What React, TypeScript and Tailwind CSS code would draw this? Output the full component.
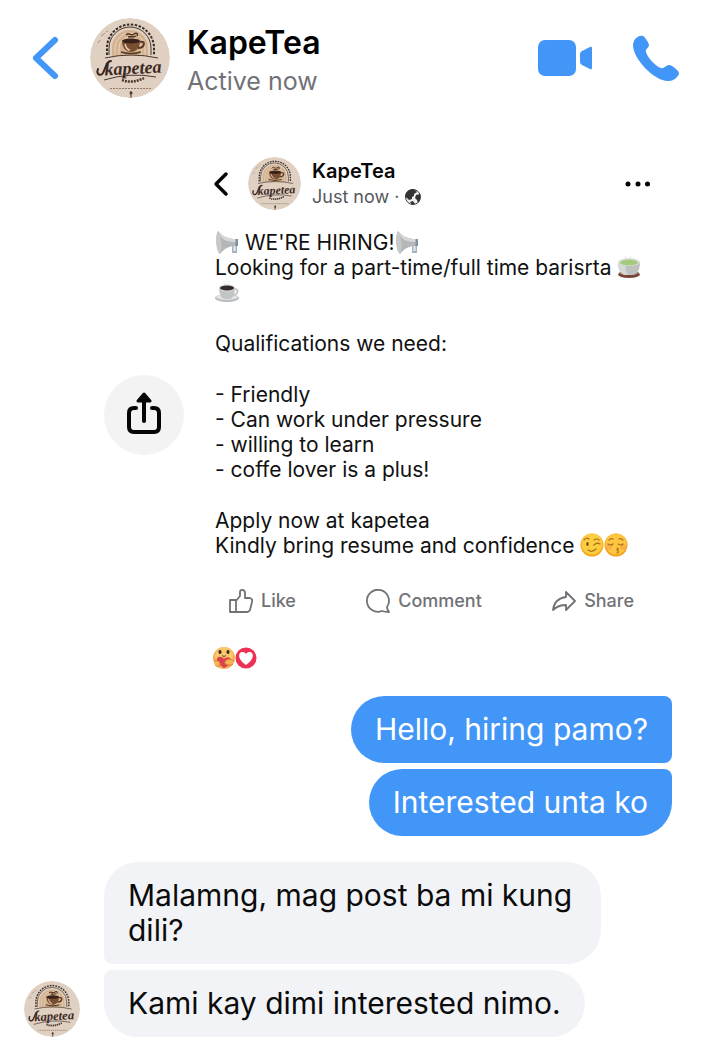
import { ReactNode } from "react";
import clsx from "clsx";

interface Message {
  id: number;
  text: string;
  mine: boolean;
  shape: string;
}

const messages: Message[] = [
  {
    id: 1,
    text: "Hello, hiring pamo?",
    mine: true,
    shape: "rounded-l-[34px] rounded-r-lg",
  },
  {
    id: 2,
    text: "Interested unta ko",
    mine: true,
    shape: "rounded-l-[34px] rounded-tr-lg rounded-br-[34px]",
  },
  {
    id: 3,
    text: "Malamng, mag post ba mi kung dili?",
    mine: false,
    shape: "rounded-t-[34px] rounded-br-[34px] rounded-bl-lg",
  },
  {
    id: 4,
    text: "Kami kay dimi interested nimo.",
    mine: false,
    shape: "rounded-r-[34px] rounded-bl-[34px] rounded-tl-lg",
  },
];

const qualifications = [
  "Friendly",
  "Can work under pressure",
  "willing to learn",
  "coffe lover is a plus!",
];

function Avatar({ className }: { className: string }) {
  return (
    <svg
      viewBox="0 0 80 80"
      role="img"
      aria-label="KapeTea"
      className={clsx("shrink-0 rounded-full", className)}
    >
      <circle cx="40" cy="40" r="40" fill="#dfd0c2" />
      <path d="M11 18l4-3M16 14l2-1M8 25l2-3" stroke="#a59385" strokeWidth="1" />
      <path d="M22 38V30a18 18 0 0 1 36 0v8z" fill="#d2b28f" />
      <path
        d="M25 37v-7a15 15 0 0 1 30 0v7M29 37v-7a11 11 0 0 1 22 0v7"
        fill="none"
        stroke="#e9d5bd"
        strokeWidth="1"
      />
      <path
        d="M19 37v-7a21 21 0 0 1 42 0v7"
        fill="none"
        stroke="#4a372d"
        strokeWidth="1"
      />
      <path
        d="M17 37v-7a23.500 23.500 0 0 1 47 0v7"
        fill="none"
        stroke="#382a25"
        strokeWidth="2"
        strokeDasharray="2.500 1.500"
      />
      <path d="M36 17c3-4 4 2 8-1c3-2 4 0 3 2M38 19c3-1 5 1 8-1" fill="none" stroke="#4a2d1d" strokeWidth="1.500" />
      <path d="M32 23h18c0 7-4 11-9 11s-9-4-9-11z" fill="#7a4f31" />
      <ellipse cx="41" cy="23" rx="9" ry="2.500" fill="#39221a" />
      <path d="M35 26c1 4 3 6 5 6" fill="none" stroke="#e6cdb0" strokeWidth="1.500" />
      <path d="M50 24c6-2 5 6-2 6" fill="none" stroke="#5a3927" strokeWidth="2" />
      <path d="M31 34q10 3 20 0" fill="none" stroke="#5a3927" strokeWidth="1.500" />
      <path d="M15 40q26-6 53 0M14 62q26-8 52-3" fill="none" stroke="#4b3930" strokeWidth="1" />
      <text
        x="43"
        y="56"
        textAnchor="middle"
        transform="rotate(-3 43 50)"
        fontFamily="Liberation Serif, serif"
        fontStyle="italic"
        fontWeight="700"
        fontSize="18"
        fill="#3b2822"
      >
        kapetea
      </text>
      <path d="M8 51c-2 5 2 8 5 4 3-5 3-12 8-12" fill="none" stroke="#3b2822" strokeWidth="2" strokeLinecap="round" />
      <path d="M32 62q10 4 22-2" fill="none" stroke="#493730" strokeWidth="2.500" strokeDasharray="2 1" />
      <path d="M20 70.500h41" stroke="#8c7669" strokeWidth="1" strokeDasharray="2 1" />
      <path d="M41 73v7" stroke="#4b3930" strokeWidth="1" />
      <circle cx="41" cy="75" r="1.500" fill="#4b3930" />
    </svg>
  );
}

function Emoji({ label, children }: { label: string; children: ReactNode }) {
  return (
    <svg
      viewBox="0 0 24 24"
      role="img"
      aria-label={label}
      className="inline-block size-6 align-[-4px]"
    >
      {children}
    </svg>
  );
}

function Megaphone() {
  return (
    <Emoji label="megaphone">
      <path d="M17 14h5v9h-5z" fill="#a3b3c2" />
      <path d="M18.500 16h2v5h-2z" fill="#e6ecf1" />
      <path d="M3 1c5 6 11 8 18 8v7c-8 0-12 3-16 8-4-3-5-18-2-23z" fill="#b4b6b8" />
      <path d="M3 1c5 6 11 8 18 8v3C12 12 6 10 3 1z" fill="#d6d7d8" />
      <path d="M3 1c3 4 5 17 2 23-4-3-5-18-2-23z" fill="#c7c8ca" />
      <path d="M20.500 9H23v7h-2.500z" fill="#7f90a1" />
    </Emoji>
  );
}

function GreenTea() {
  return (
    <Emoji label="green tea">
      <ellipse cx="12" cy="19.500" rx="11" ry="3.500" fill="#774536" />
      <ellipse cx="12" cy="18" rx="10" ry="2" fill="#a47463" />
      <path d="M1 7h22c0 8-3 13-8 13H9C4 20 1 15 1 7z" fill="#bfc1c0" />
      <path d="M1 7h8c-1 7 0 10 2 13H9C4 20 1 15 1 7z" fill="#d6d8d7" />
      <ellipse cx="12" cy="7" rx="11" ry="4" fill="#dfe3dc" />
      <ellipse cx="12" cy="7.500" rx="9" ry="3" fill="#a5c97e" />
      <path d="M8 5c-2-2 2-2 0-4M13 4c-2-2 2-2 0-3" stroke="#e3e3e3" fill="none" />
    </Emoji>
  );
}

function Coffee() {
  return (
    <Emoji label="coffee">
      <ellipse cx="12" cy="18" rx="12" ry="4" fill="#b8bbbd" />
      <ellipse cx="12" cy="17" rx="11" ry="3" fill="#e0e2e3" />
      <path d="M19 9c5-1 5 6-2 6" fill="none" stroke="#c5c8ca" strokeWidth="2" />
      <path d="M4 8h16c0 7-3 11-6 11h-4c-3 0-6-4-6-11z" fill="#c2c4c6" />
      <ellipse cx="12" cy="8" rx="8" ry="3.500" fill="#d9d9d9" />
      <ellipse cx="12" cy="8" rx="7" ry="2.500" fill="#332c2a" />
      <path d="M10 5c-2-2 2-2 0-4M14 4c-2-1 2-2 0-3" stroke="#e2e2e2" fill="none" />
    </Emoji>
  );
}

function Wink() {
  return (
    <Emoji label="winking face">
      <circle cx="12" cy="12" r="11.500" fill="#f5a91f" />
      <circle cx="12" cy="11" r="10.500" fill="#fdcc3f" />
      <ellipse cx="7.500" cy="11" rx="1.200" ry="2" fill="#6f451b" />
      <path d="M4 7q2-3 5-1M14 7q3-2 5 0M14 12q3-3 6-1M8 17q4 3 8-1" fill="none" stroke="#a8701f" strokeWidth="1.200" strokeLinecap="round" />
    </Emoji>
  );
}

function Kiss() {
  return (
    <Emoji label="kissing face">
      <circle cx="12" cy="12" r="11.500" fill="#f5a323" />
      <circle cx="12" cy="11" r="10.500" fill="#fdc63e" />
      <circle cx="5" cy="14" r="3" fill="#f7994a" opacity=".5" />
      <circle cx="19" cy="14" r="3" fill="#f7994a" opacity=".5" />
      <path d="M5 7q2-2 4-1M15 6q2-1 4 1M4 11q3 2 5 0M14 11q3 2 5 0M13 15q3 1 0 2q3 2 0 3" fill="none" stroke="#a8701f" strokeWidth="1.200" strokeLinecap="round" />
    </Emoji>
  );
}

function CareReaction() {
  return (
    <svg viewBox="0 0 22 22" role="img" aria-label="Care" className="size-[22px]">
      <circle cx="11" cy="11" r="11" fill="#f4ae55" />
      <circle cx="11" cy="9" r="9" fill="#fac76a" />
      <ellipse cx="7" cy="5" rx="1.500" ry="2" fill="#37241c" />
      <ellipse cx="15" cy="5" rx="1.500" ry="2" fill="#37241c" />
      <path d="M9 8.500q2 2 4 0" fill="none" stroke="#68401e" />
      <path d="M11 21C0 14 4 9 8 10c2 0 3 2 3 2s3-3 6-1c3 3-1 8-6 10z" fill="#df3d50" />
      <path d="M1 14c3-1 6 0 6 3s-3 3-5 1M21 14c-4-3-8-2-9 1s5 4 8 2" fill="#f7b558" stroke="#d98437" />
    </svg>
  );
}

function LoveReaction() {
  return (
    <svg viewBox="0 0 22 22" role="img" aria-label="Love" className="size-[22px]">
      <circle cx="11" cy="11" r="10.500" fill="#ec3154" />
      <path d="M11 18C2 12 3 5 7.500 5c2.500 0 3.500 2 3.500 2s1-2 3.500-2c4.500 0 5.500 7-3.500 13z" fill="#fff" />
    </svg>
  );
}

function Globe() {
  return (
    <svg viewBox="0 0 16 16" role="img" aria-label="Public" className="size-4">
      <circle cx="8" cy="8" r="7.500" fill="#eee" stroke="#444" />
      <path d="M8 0C3 0 0 4 0 8l2 1 2 2 3-1V8l2-1V5l3-2-2-2zM15 5l-4 1-1 3 2 2 1 3c2-2 3-6 2-9zM5 13l3-1 2 3-3 1z" fill="#333" />
    </svg>
  );
}

function Header() {
  return (
    <header className="flex items-center px-6 pt-4">
      <button aria-label="Back" className="ml-2">
        <svg viewBox="0 0 28 44" className="h-11 w-7">
          <path d="M23 4L4 22L23 40" fill="none" stroke="#4296f7" strokeWidth="6" strokeLinecap="round" strokeLinejoin="round" />
        </svg>
      </button>
      <Avatar className="ml-[30px] size-20" />
      <div className="ml-[17px] flex-1 pt-2">
        <h1 className="text-[32px] leading-[38px] font-semibold text-black">
          KapeTea
        </h1>
        <p className="text-[25px] leading-[38px] text-[#717277]">Active now</p>
      </div>
      <button aria-label="Video call" className="mr-10">
        <svg viewBox="0 0 55 38" className="h-[38px] w-[55px]" fill="#4296f7">
          <rect x="0" y="1" width="38" height="36" rx="7" />
          <path d="M42 15q0-2 2-3l8-4q2-1 2 1v20q0 2-2 1l-8-4q-2-1-2-3z" />
        </svg>
      </button>
      <button aria-label="Call">
        <svg viewBox="0 0 46 47" className="h-[47px] w-[46px]" fill="#4296f7">
          <path d="M2 4C5 1 8 0 10 1c2 1 6 7 6 9 0 3-4 4-3 7 1 5 10 15 15 16 3 1 5-3 8-3 3 0 9 5 10 8 0 3-5 8-10 8C22 47 0 24 0 10c0-2 1-4 2-6z" />
        </svg>
      </button>
    </header>
  );
}

function PostAction({ label, children }: { label: string; children: ReactNode }) {
  return (
    <button className="flex items-center gap-2 text-lg leading-6 font-medium text-[#707276]">
      <svg
        viewBox="0 0 24 24"
        className="size-6"
        fill="none"
        stroke="currentColor"
        strokeWidth="1.800"
        strokeLinecap="round"
        strokeLinejoin="round"
        aria-hidden="true"
      >
        {children}
      </svg>
      {label}
    </button>
  );
}

function SharedPost() {
  return (
    <article className="min-w-0 flex-1">
      <div className="flex items-center">
        <button aria-label="Close post">
          <svg viewBox="0 0 16 26" className="h-[26px] w-4">
            <path d="M13 3L3 13L13 23" fill="none" stroke="#050505" strokeWidth="3.500" strokeLinecap="round" strokeLinejoin="round" />
          </svg>
        </button>
        <Avatar className="ml-[19px] size-[53px]" />
        <div className="ml-[11px] flex-1">
          <h2 className="text-xl leading-[26px] font-semibold text-[#080808]">
            KapeTea
          </h2>
          <p className="flex items-center gap-[6px] text-lg leading-[26px] text-[#55575b]">
            Just now · <Globe />
          </p>
        </div>
        <button aria-label="More options" className="mr-[21px]">
          <svg viewBox="0 0 26 6" className="h-[6px] w-[26px]" fill="#050505">
            <circle cx="3" cy="3" r="2.500" />
            <circle cx="13" cy="3" r="2.500" />
            <circle cx="22.500" cy="3" r="2.500" />
          </svg>
        </button>
      </div>
      <div className="mt-5 ml-[2px] text-[21px] leading-[25px] text-[#111]">
        <p>
          <Megaphone /> WE'RE HIRING!
          <Megaphone />
        </p>
        <p>
          Looking for a part-time/full time barisrta <GreenTea />
          <br />
          <Coffee />
        </p>
        <p className="mt-[26px]">Qualifications we need:</p>
        <ul className="mt-[26px]">
          {qualifications.map((q) => (
            <li key={q}>- {q}</li>
          ))}
        </ul>
        <p className="mt-[26px]">Apply now at kapetea</p>
        <p>
          Kindly bring resume and confidence <Wink />
          <Kiss />
        </p>
      </div>
      <div className="mt-[31px] mr-[38px] ml-4 flex justify-between">
        <PostAction label="Like">
          <path d="M1 11h6v12H1zM7 12l4-5V3c0-3 5-3 5 1v5h5q3 1 2 4l-2 8q-1 2-3 2H7" />
        </PostAction>
        <PostAction label="Comment">
          <path d="M21 18A11 11 0 1 0 16 22q3 1 7 1-2-2-2-5z" />
        </PostAction>
        <PostAction label="Share">
          <path d="M14 3l9 9-9 9v-5c-6 0-9 1-13 5 1-8 5-12 13-13z" />
        </PostAction>
      </div>
      <div className="mt-[34px] flex">
        <CareReaction />
        <LoveReaction />
      </div>
    </article>
  );
}

function Bubble({ message }: { message: Message }) {
  return (
    <p
      className={clsx(
        "w-fit max-w-[497px] px-6 py-4 text-3xl leading-[35px]",
        message.shape,
        message.mine ? "bg-[#4296f7] text-white" : "bg-[#f2f3f7] text-[#0b0b0b]"
      )}
    >
      {message.text}
    </p>
  );
}

export default function App() {
  const sent = messages.filter((m) => m.mine);
  const received = messages.filter((m) => !m.mine);

  return (
    <div className="bg-white pb-[10px] font-['Inter',sans-serif]">
      <Header />
      <main className="pr-[31px]">
        <section className="mt-[57px] flex items-center">
          <button
            aria-label="Forward post"
            className="mt-1 mr-[29px] ml-[104px] flex size-20 shrink-0 items-center justify-center rounded-full bg-[#f3f3f4]"
          >
            <svg viewBox="0 0 34 42" className="mb-1 h-[42px] w-[34px]" fill="none" stroke="#050505" strokeWidth="4" strokeLinecap="round" strokeLinejoin="round">
              <path d="M9 16H7q-5 0-5 5v14q0 5 5 5h20q5 0 5-5V21q0-5-5-5h-2M17 29V7" />
              <path d="M17 2l6 7H11z" fill="#050505" strokeWidth="3" />
            </svg>
          </button>
          <SharedPost />
        </section>
        <section className="mt-[27px] flex flex-col items-end gap-[6px]">
          {sent.map((m) => (
            <Bubble key={m.id} message={m} />
          ))}
        </section>
        <section className="mt-[26px] flex items-end">
          <Avatar className="mr-6 ml-6 size-14" />
          <div className="flex flex-col gap-[6px]">
            {received.map((m) => (
              <Bubble key={m.id} message={m} />
            ))}
          </div>
        </section>
      </main>
    </div>
  );
}
